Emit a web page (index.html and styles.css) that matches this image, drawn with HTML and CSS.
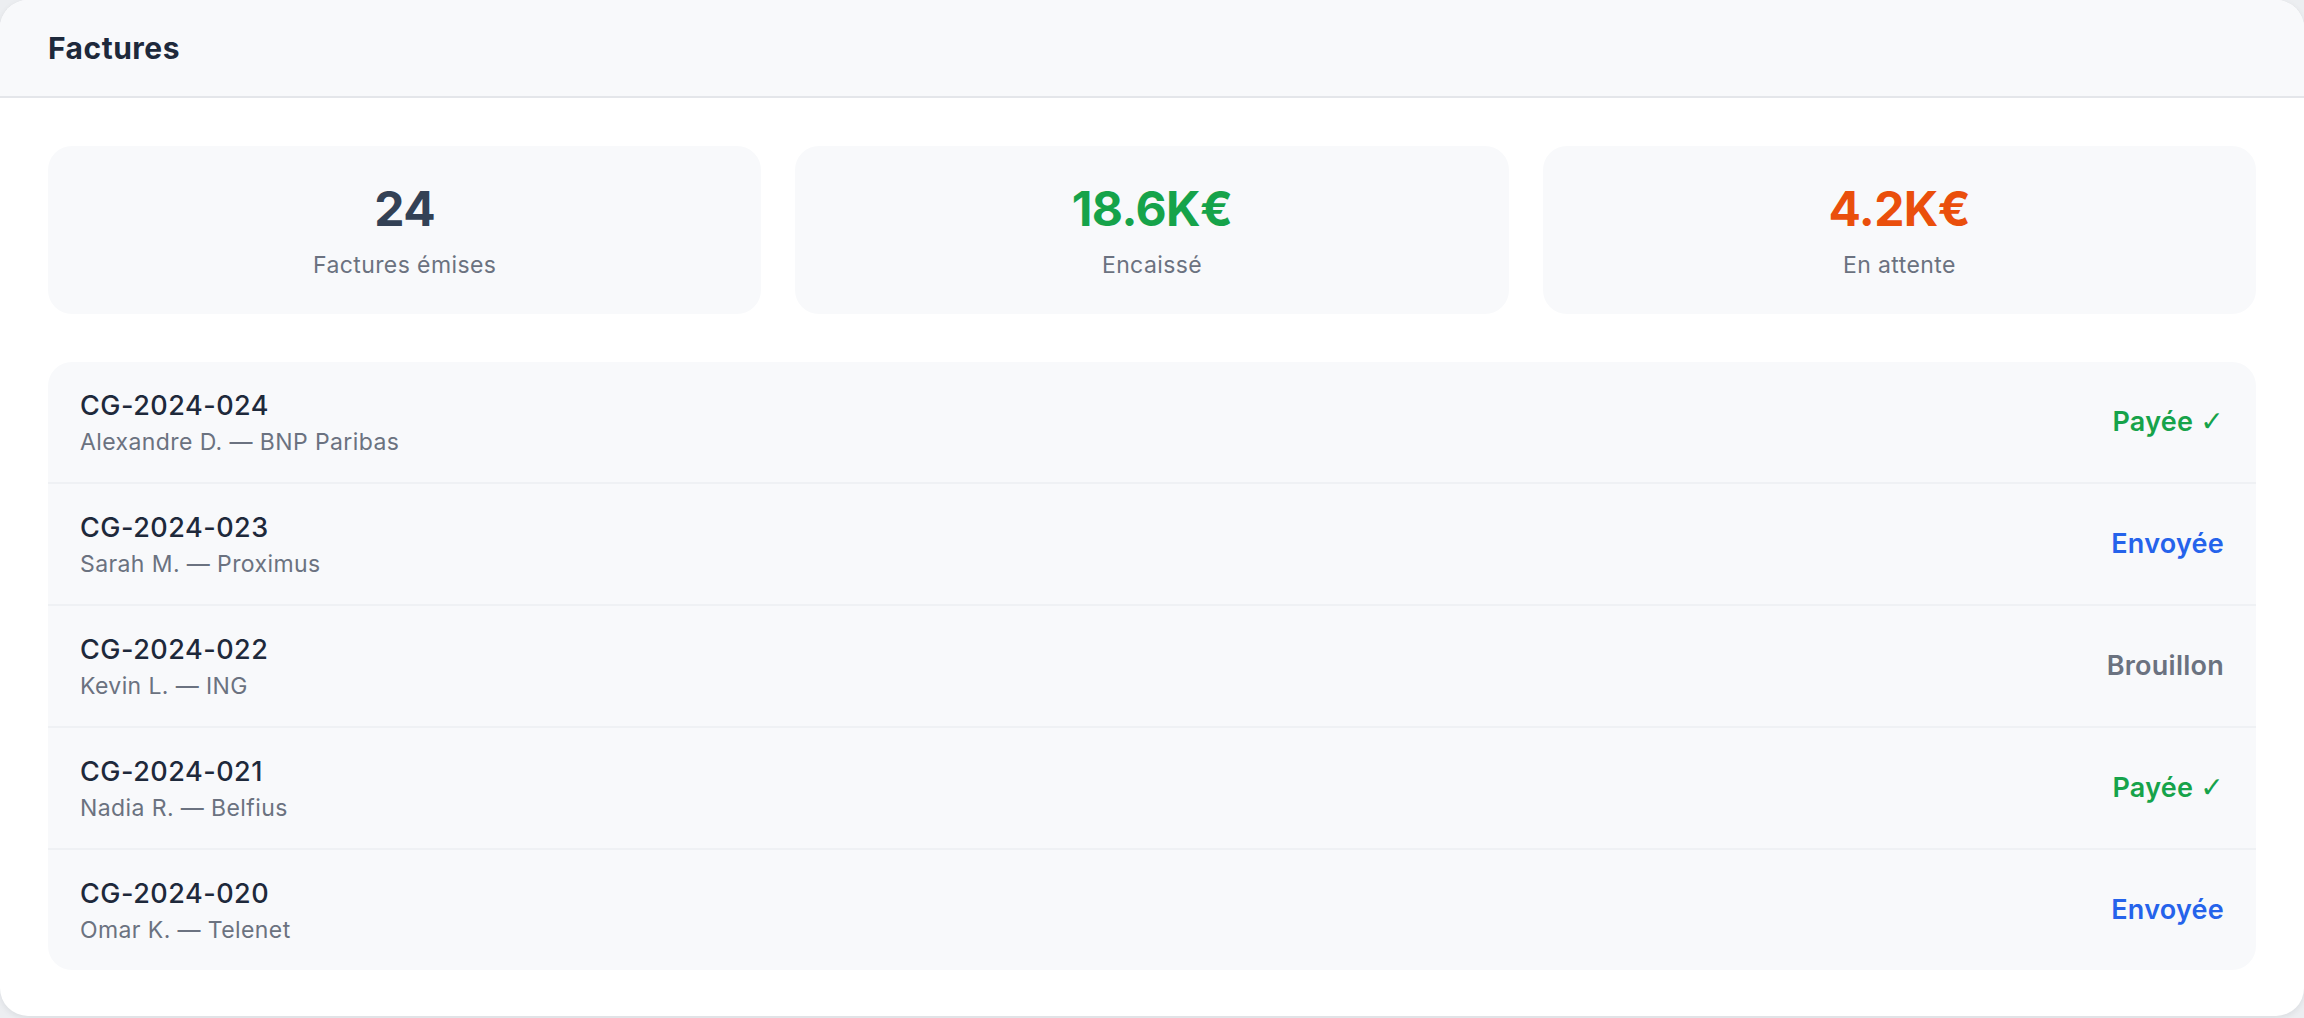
FILE: index.html
```html
<!DOCTYPE html>
<html lang="fr">
<head>
<meta charset="utf-8">
<title>Factures</title>
<link rel="stylesheet" href="styles.css">
</head>
<body>
<div class="panel">
  <header class="panel-head">
    <h1 class="panel-title">Factures</h1>
  </header>
  <main class="panel-body">
    <section class="stats">
      <div class="stat">
        <div class="stat-value v-dark">24</div>
        <div class="stat-label">Factures émises</div>
      </div>
      <div class="stat">
        <div class="stat-value v-green">18.6K€</div>
        <div class="stat-label">Encaissé</div>
      </div>
      <div class="stat">
        <div class="stat-value v-orange">4.2K€</div>
        <div class="stat-label">En attente</div>
      </div>
    </section>
    <section class="list">
      <div class="row">
        <div class="row-main">
          <div class="row-id">CG-2024-024</div>
          <div class="row-sub">Alexandre D. — BNP Paribas</div>
        </div>
        <div class="status s-paid">Payée <span class="check">✓</span></div>
      </div>
      <div class="row">
        <div class="row-main">
          <div class="row-id">CG-2024-023</div>
          <div class="row-sub">Sarah M. — Proximus</div>
        </div>
        <div class="status s-sent">Envoyée</div>
      </div>
      <div class="row">
        <div class="row-main">
          <div class="row-id">CG-2024-022</div>
          <div class="row-sub">Kevin L. — ING</div>
        </div>
        <div class="status s-draft">Brouillon</div>
      </div>
      <div class="row">
        <div class="row-main">
          <div class="row-id">CG-2024-021</div>
          <div class="row-sub">Nadia R. — Belfius</div>
        </div>
        <div class="status s-paid">Payée <span class="check">✓</span></div>
      </div>
      <div class="row">
        <div class="row-main">
          <div class="row-id">CG-2024-020</div>
          <div class="row-sub">Omar K. — Telenet</div>
        </div>
        <div class="status s-sent">Envoyée</div>
      </div>
    </section>
  </main>
</div>
</body>
</html>
```

FILE: styles.css
```css
* { box-sizing: border-box; }
html, body { margin: 0; padding: 0; }
body {
  background: #eceef1;
  font-family: Inter, "Noto Sans", "Liberation Sans", sans-serif;
  height: 1018px;
  overflow: hidden;
}
.panel {
  width: 2304px;
  height: 1016px;
  background: #ffffff;
  border-radius: 28px;
  overflow: hidden;
  box-shadow: 0 2px 6px rgba(15, 23, 42, 0.08);
}
.panel-head {
  background: #f8f9fb;
  border-bottom: 2px solid #e4e6ea;
  padding: 24px 48px;
}
.panel-title {
  margin: 0;
  font-size: 30px;
  line-height: 48px;
  font-weight: 700;
  letter-spacing: 0.5px;
  color: #1e293b;
}
.panel-body {
  padding: 48px;
  display: flex;
  flex-direction: column;
  gap: 48px;
}
.stats {
  display: grid;
  grid-template-columns: repeat(3, 1fr);
  gap: 34px;
}
.stat {
  background: #f8f9fb;
  border-radius: 24px;
  height: 168px;
  display: flex;
  flex-direction: column;
  align-items: center;
  justify-content: center;
  gap: 11px;
}
.stat-value {
  font-size: 48px;
  line-height: 58px;
  font-weight: 700;
  letter-spacing: -0.6px;
}
.v-dark { color: #334155; }
.v-green { color: #16a34a; }
.v-orange { color: #ea4f0c; }
.stat-label {
  font-size: 23px;
  line-height: 32px;
  letter-spacing: 0.4px;
  color: #6b7280;
}
.list {
  background: #f8f9fb;
  border-radius: 24px;
  display: flex;
  flex-direction: column;
}
.row {
  display: flex;
  align-items: center;
  justify-content: space-between;
  padding: 24px 32px;
  height: 122px;
  border-bottom: 2px solid #eff1f4;
}
.row:last-child { border-bottom: none; height: 120px; }
.row-id {
  font-size: 27px;
  line-height: 40px;
  font-weight: 500;
  letter-spacing: 0.5px;
  color: #1e293b;
}
.row-sub {
  font-size: 23px;
  line-height: 32px;
  letter-spacing: 0.4px;
  color: #6b7280;
}
.status {
  font-size: 27px;
  line-height: 40px;
  font-weight: 600;
  letter-spacing: 0.25px;
}
.check {
  font-family: "DejaVu Sans", sans-serif;
  font-size: 28px;
  font-weight: 400;
}
.s-paid { color: #16a34a; }
.s-sent { color: #2563eb; }
.s-draft { color: #6b7280; }
```
